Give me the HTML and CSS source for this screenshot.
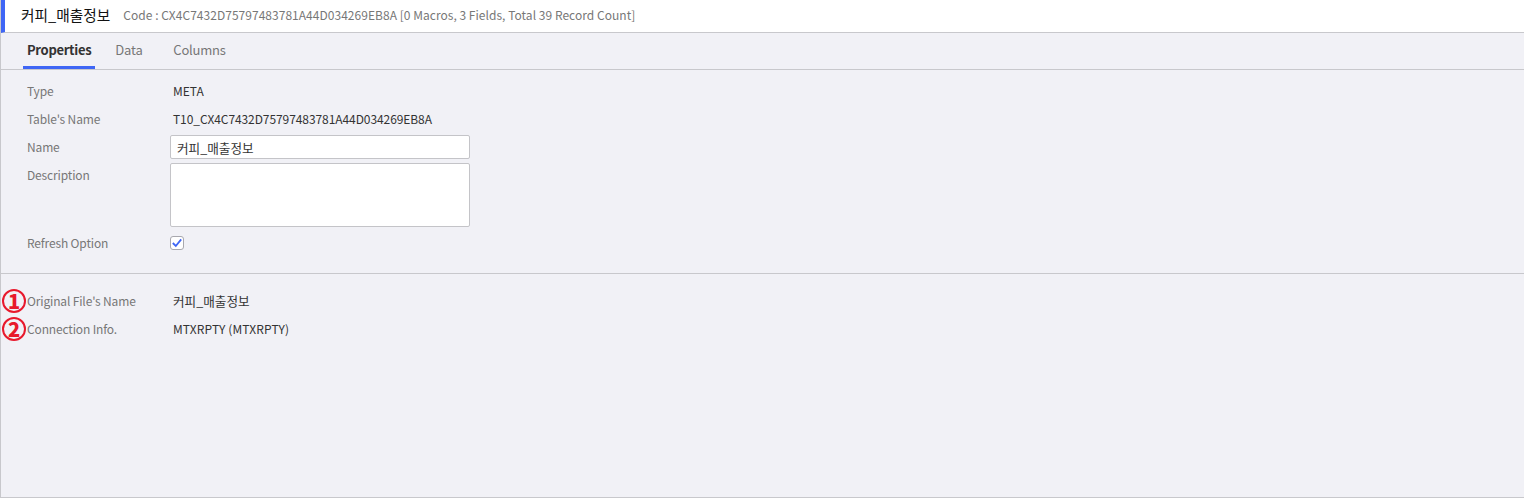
FILE: index.html
```html
<!DOCTYPE html>
<html lang="en">
<head>
  <meta charset="UTF-8">
  <title>커피_매출정보</title>
  <link rel="stylesheet" href="styles.css">
</head>
<body>
  <div class="page">
    <div class="title-bar">
      <span class="title">커피_매출정보</span>
      <span class="code">Code : CX4C7432D75797483781A44D034269EB8A [0 Macros, 3 Fields, Total 39 Record Count]</span>
    </div>
    <div class="tabs">
      <div class="tab active">Properties</div>
      <div class="tab">Data</div>
      <div class="tab">Columns</div>
    </div>
    <div class="section props">
      <div class="row">
        <div class="label">Type</div>
        <div class="value">META</div>
      </div>
      <div class="row">
        <div class="label">Table's Name</div>
        <div class="value value-code">T10_CX4C7432D75797483781A44D034269EB8A</div>
      </div>
      <div class="row">
        <div class="label">Name</div>
        <input class="field" type="text" value="커피_매출정보">
      </div>
      <div class="row row-tall">
        <div class="label">Description</div>
        <textarea class="field area"></textarea>
      </div>
      <div class="row">
        <div class="label">Refresh Option</div>
        <div class="check">
          <svg width="10" height="10" viewBox="0 0 10 10"><path d="M0.8 5 L3.8 8 L9.2 1.4" fill="none" stroke="#3f66f5" stroke-width="1.8"/></svg>
        </div>
      </div>
    </div>
    <div class="section info">
      <div class="row">
        <span class="marker">1</span>
        <div class="label">Original File's Name</div>
        <div class="value value-ko">커피_매출정보</div>
      </div>
      <div class="row">
        <span class="marker">2</span>
        <div class="label">Connection Info.</div>
        <div class="value value-wide">MTXRPTY (MTXRPTY)</div>
      </div>
    </div>
  </div>
</body>
</html>
```

FILE: styles.css
```css
html, body {
  margin: 0;
  padding: 0;
}
body {
  font-family: "Noto Sans CJK KR", "Noto Sans", sans-serif;
  font-size: 12px;
  color: #333;
  background: #fff;
}
.page {
  box-sizing: border-box;
  height: 498px;
  background: #f1f1f6;
  border-left: 1px solid #c8c8cc;
  border-bottom: 1px solid #c8c8cc;
}
.title-bar {
  box-sizing: border-box;
  display: flex;
  align-items: center;
  height: 33px;
  padding: 0 0 4px 16px;
  background: #fff;
  border-left: 4px solid #3f66f5;
  border-bottom: 1px solid #c8c8cc;
}
.title {
  font-size: 14.7px;
  color: #111;
}
.code {
  margin-left: 13px;
  color: #777;
  letter-spacing: 0.03px;
}
.tabs {
  box-sizing: border-box;
  display: flex;
  height: 37px;
  padding-left: 22px;
  border-bottom: 1px solid #c8c8cc;
}
.tab {
  box-sizing: border-box;
  min-width: 42px;
  height: 36px;
  padding: 7px 4px 0;
  margin-right: 16px;
  color: #777;
  font-size: 13px;
  letter-spacing: -0.2px;
}
.tab.active {
  font-weight: 700;
  color: #333;
  letter-spacing: -0.3px;
  border-bottom: 3px solid #3f66f5;
}
.section {
  padding: 7px 0 0 26px;
}
.props {
  box-sizing: border-box;
  height: 204px;
  border-bottom: 1px solid #c8c8cc;
}
.info {
  padding-top: 13px;
}
.row {
  position: relative;
  display: flex;
  align-items: flex-start;
  min-height: 28px;
}
.row-tall {
  min-height: 68px;
}
.label {
  width: 146px;
  line-height: 28px;
  color: #777;
  letter-spacing: -0.15px;
}
.value {
  line-height: 28px;
  color: #333;
}
.value-code {
  letter-spacing: -0.08px;
}
.value-wide {
  letter-spacing: 0.1px;
}
.value-ko {
  font-size: 12.6px;
}
.field {
  box-sizing: border-box;
  display: block;
  width: 300px;
  height: 24px;
  margin: 2px 0 0 -3px;
  padding: 0 6px;
  background: #fff;
  border: 1px solid #c4c4c8;
  border-radius: 2px;
  font-family: inherit;
  font-size: 12.6px;
  color: #333;
  outline: none;
}
.area {
  height: 64px;
  resize: none;
}
.check {
  box-sizing: border-box;
  display: flex;
  align-items: center;
  justify-content: center;
  width: 14px;
  height: 14px;
  margin: 7px 0 0 -3px;
  background: #fff;
  border: 1px solid #a8a8ae;
  border-radius: 3px;
}
/* annotation circles drawn over the screenshot */
.marker {
  position: absolute;
  left: -25px;
  top: 2px;
  box-sizing: border-box;
  width: 24px;
  height: 24px;
  border: 2px solid #e8192c;
  border-radius: 50%;
  text-align: center;
  font-size: 20px;
  font-weight: 900;
  line-height: 19px;
  color: #e8192c;
}
```
